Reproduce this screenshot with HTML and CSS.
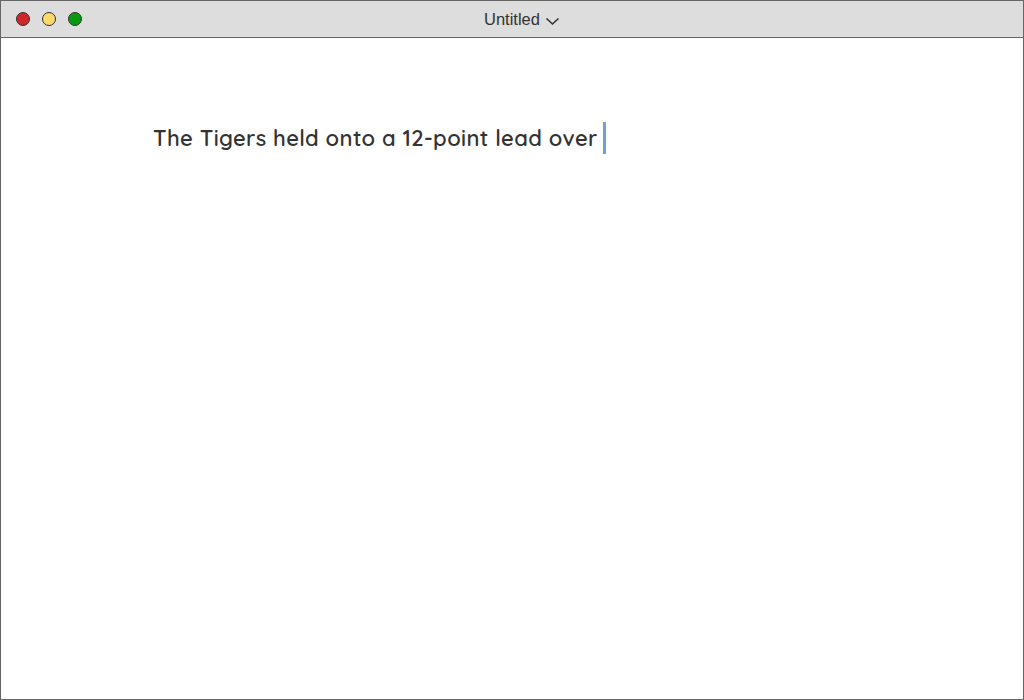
FILE: index.html
```html
<!DOCTYPE html>
<html>
<head>
<meta charset="utf-8">
<link rel="stylesheet" href="styles.css">
</head>
<body>
<div class="window">
  <div class="titlebar">
    <div class="lights">
      <span class="light red"></span>
      <span class="light yellow"></span>
      <span class="light green"></span>
    </div>
    <div class="title">Untitled
      <svg class="chev" width="15" height="10" viewBox="0 0 15 10"><path d="M1.5 2.5 L7.5 8 L13.5 2.5" fill="none" stroke="#333" stroke-width="1.6"/></svg>
    </div>
  </div>
  <div class="content">
    <div class="line"><span class="text">The Tigers held onto a 12-point lead over</span><span class="caret"></span></div>
  </div>
</div>
</body>
</html>
```
FILE: styles.css
```css
html, body { margin: 0; padding: 0; background: #fff; }
.window {
  width: 1024px; height: 700px; box-sizing: border-box;
  border: 1px solid #666; display: flex; flex-direction: column;
  overflow: hidden;
}
.titlebar {
  height: 37px; flex: none; box-sizing: border-box;
  background: #dddddd; border-bottom: 1px solid #666;
  position: relative; display: flex; align-items: center; justify-content: center;
}
.lights { position: absolute; left: 15px; top: 11px; display: flex; gap: 12px; }
.light { width: 14px; height: 14px; border-radius: 50%; box-sizing: border-box; border: 1px solid #333; }
.red { background: #d0262a; }
.yellow { background: #fcd96a; }
.green { background: #079b12; }
.title {
  font-family: "Liberation Sans", Arial, sans-serif; font-size: 16.5px; color: #333;
  display: flex; align-items: center; gap: 5px; margin-top: 1px; margin-left: 20px;
}
.chev { margin-top: 2px; }
.content { flex: 1; padding: 84px 0 0 152px; }
.line { display: flex; align-items: center; gap: 5px; }
.text {
  font-family: "Quicksand", "Lato", "Noto Sans", sans-serif; font-size: 22px; color: #333;
  letter-spacing: 0.36px; font-weight: 600;
}
.caret { width: 3px; height: 32px; background: #6fa0d8; }
```
